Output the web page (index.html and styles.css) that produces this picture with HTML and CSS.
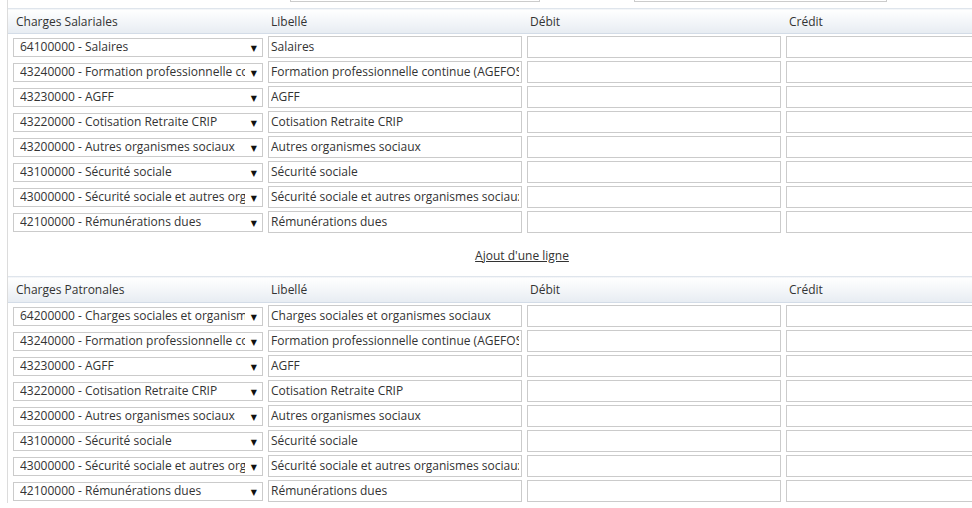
FILE: index.html
```html
<!DOCTYPE html>
<html lang="fr">
<head>
<meta charset="utf-8">
<title>Charges</title>
<link rel="stylesheet" href="styles.css">
</head>
<body>
<div class="panel">
  <div class="filters">
    <label class="flabel flabel-1">Période de paye :</label>
    <input class="finput finput-1" type="text">
    <label class="flabel flabel-2">Regroupement</label>
    <input class="finput finput-2" type="text">
  </div>

  <table class="grid">
    <thead>
      <tr><th>Charges Salariales</th><th>Libellé</th><th>Débit</th><th>Crédit</th></tr>
    </thead>
    <tbody>
      <tr><td><span class="sel"><select><option>64100000 - Salaires</option></select></span></td><td><input class="txt" type="text" value="Salaires"></td><td><input class="txt" type="text"></td><td><input class="txt" type="text"></td></tr>
      <tr><td><span class="sel"><select><option>43240000 - Formation professionnelle continue (AGEFOS)</option></select></span></td><td><input class="txt" type="text" value="Formation professionnelle continue (AGEFOS)"></td><td><input class="txt" type="text"></td><td><input class="txt" type="text"></td></tr>
      <tr><td><span class="sel"><select><option>43230000 - AGFF</option></select></span></td><td><input class="txt" type="text" value="AGFF"></td><td><input class="txt" type="text"></td><td><input class="txt" type="text"></td></tr>
      <tr><td><span class="sel"><select><option>43220000 - Cotisation Retraite CRIP</option></select></span></td><td><input class="txt" type="text" value="Cotisation Retraite CRIP"></td><td><input class="txt" type="text"></td><td><input class="txt" type="text"></td></tr>
      <tr><td><span class="sel"><select><option>43200000 - Autres organismes sociaux</option></select></span></td><td><input class="txt" type="text" value="Autres organismes sociaux"></td><td><input class="txt" type="text"></td><td><input class="txt" type="text"></td></tr>
      <tr><td><span class="sel"><select><option>43100000 - Sécurité sociale</option></select></span></td><td><input class="txt" type="text" value="Sécurité sociale"></td><td><input class="txt" type="text"></td><td><input class="txt" type="text"></td></tr>
      <tr><td><span class="sel"><select><option>43000000 - Sécurité sociale et autres organismes sociaux</option></select></span></td><td><input class="txt" type="text" value="Sécurité sociale et autres organismes sociaux"></td><td><input class="txt" type="text"></td><td><input class="txt" type="text"></td></tr>
      <tr><td><span class="sel"><select><option>42100000 - Rémunérations dues</option></select></span></td><td><input class="txt" type="text" value="Rémunérations dues"></td><td><input class="txt" type="text"></td><td><input class="txt" type="text"></td></tr>
    </tbody>
  </table>

  <div class="addline"><a href="#">Ajout d'une ligne</a></div>

  <table class="grid grid-2">
    <thead>
      <tr><th>Charges Patronales</th><th>Libellé</th><th>Débit</th><th>Crédit</th></tr>
    </thead>
    <tbody>
      <tr><td><span class="sel"><select><option>64200000 - Charges sociales et organismes sociaux</option></select></span></td><td><input class="txt" type="text" value="Charges sociales et organismes sociaux"></td><td><input class="txt" type="text"></td><td><input class="txt" type="text"></td></tr>
      <tr><td><span class="sel"><select><option>43240000 - Formation professionnelle continue (AGEFOS)</option></select></span></td><td><input class="txt" type="text" value="Formation professionnelle continue (AGEFOS)"></td><td><input class="txt" type="text"></td><td><input class="txt" type="text"></td></tr>
      <tr><td><span class="sel"><select><option>43230000 - AGFF</option></select></span></td><td><input class="txt" type="text" value="AGFF"></td><td><input class="txt" type="text"></td><td><input class="txt" type="text"></td></tr>
      <tr><td><span class="sel"><select><option>43220000 - Cotisation Retraite CRIP</option></select></span></td><td><input class="txt" type="text" value="Cotisation Retraite CRIP"></td><td><input class="txt" type="text"></td><td><input class="txt" type="text"></td></tr>
      <tr><td><span class="sel"><select><option>43200000 - Autres organismes sociaux</option></select></span></td><td><input class="txt" type="text" value="Autres organismes sociaux"></td><td><input class="txt" type="text"></td><td><input class="txt" type="text"></td></tr>
      <tr><td><span class="sel"><select><option>43100000 - Sécurité sociale</option></select></span></td><td><input class="txt" type="text" value="Sécurité sociale"></td><td><input class="txt" type="text"></td><td><input class="txt" type="text"></td></tr>
      <tr><td><span class="sel"><select><option>43000000 - Sécurité sociale et autres organismes sociaux</option></select></span></td><td><input class="txt" type="text" value="Sécurité sociale et autres organismes sociaux"></td><td><input class="txt" type="text"></td><td><input class="txt" type="text"></td></tr>
      <tr><td><span class="sel"><select><option>42100000 - Rémunérations dues</option></select></span></td><td><input class="txt" type="text" value="Rémunérations dues"></td><td><input class="txt" type="text"></td><td><input class="txt" type="text"></td></tr>
    </tbody>
  </table>
</div>
</body>
</html>
```

FILE: styles.css
```css
html, body {
  margin: 0;
  padding: 0;
  background: #fff;
  overflow: hidden;
}
body {
  font-family: "Open Sans", "DejaVu Sans", sans-serif;
  font-size: 12px;
  color: #333;
  width: 972px;
  height: 508px;
}
.panel {
  margin-left: 7px;
  border-left: 1px solid #dcdcdc;
  width: 1060px;
  min-height: 508px;
}
.filters {
  display: flex;
  align-items: center;
  height: 22px;
  margin-top: -20px;
}
.flabel {
  text-align: right;
  color: #333;
  line-height: 22px;
}
.flabel-1 { width: 274px; }
.flabel-2 { width: 78px; margin-left: 8px; }
.finput {
  box-sizing: border-box;
  height: 22px;
  border: 1px solid #ccc;
  margin: 0 0 0 8px;
  padding: 0;
}
.finput-1 { width: 250px; }
.finput-2 { width: 253px; }

.grid {
  border-collapse: collapse;
  table-layout: fixed;
  width: 1034px;
  margin-top: 6px;
}
.grid-2 { margin-top: 0; }
.grid th {
  text-align: left;
  font-weight: normal;
  height: 24px;
  padding: 0 3px 0 6px;
  width: 250px;
  background: linear-gradient(#ffffff, #e7ecf2);
  border-top: 1px solid #dfe5ec;
  border-bottom: 1px solid #d3dce7;
  color: #333;
}
.grid-2 th { height: 25px; }
.grid th:first-child { padding-left: 8px; width: 246px; }
.grid td {
  padding: 2px 2px 1px 3px;
  height: 22px;
  vertical-align: middle;
  line-height: 0;
}
.grid td:first-child { padding-left: 5px; }
.txt {
  box-sizing: border-box;
  width: 254px;
  height: 22px;
  border: 1px solid #cbcbcb;
  padding: 0 2px 1px;
  margin: 0;
  font-family: inherit;
  font-size: 12px;
  color: #333;
  background: #fff;
  outline: none;
}
.sel {
  position: relative;
  display: inline-block;
  line-height: 0;
}
.sel select {
  -webkit-appearance: none;
  appearance: none;
  box-sizing: border-box;
  width: 250px;
  height: 19px;
  border: 1px solid #cbcbcb;
  border-radius: 0;
  padding: 0 17px 1px 6px;
  margin: 0;
  background: #fff;
  font-family: inherit;
  font-size: 12px;
  color: #333;
  line-height: 16px;
}
.sel::after {
  content: "▼";
  position: absolute;
  right: 6px;
  top: 5px;
  font-size: 8px;
  line-height: 9px;
  color: #111;
  pointer-events: none;
}
.addline {
  width: 1034px;
  height: 42px;
  display: flex;
  align-items: center;
  justify-content: center;
  padding-right: 6px;
  box-sizing: border-box;
}
.addline a {
  color: #333;
  text-decoration: underline;
  font-size: 12px;
}
```
